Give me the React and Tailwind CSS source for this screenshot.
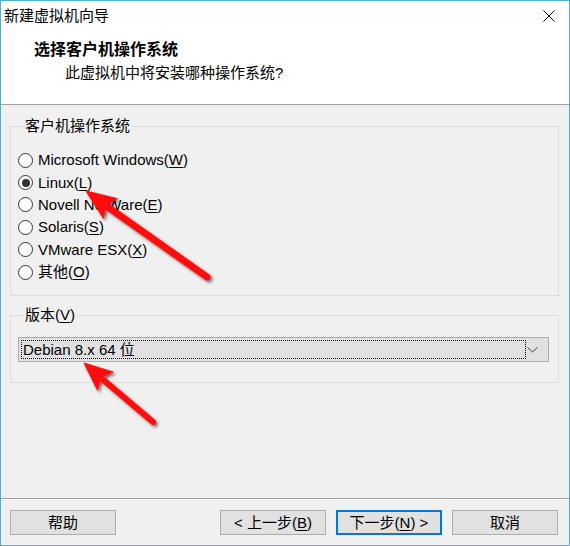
import React from 'react';

const FONT = { fontFamily: '"Liberation Sans", "Noto Sans CJK SC", sans-serif' };

const Mn = ({ children }) => <span className="underline underline-offset-2">{children}</span>;

const options = [
  { label: 'Microsoft Windows', key: 'W' },
  { label: 'Linux', key: 'L', checked: true },
  { label: 'Novell NetWare', key: 'E' },
  { label: 'Solaris', key: 'S' },
  { label: 'VMware ESX', key: 'X' },
  { label: '其他', key: 'O' },
];

const Radio = ({ checked }) => (
  <span className="w-[15px] h-[15px] rounded-full border border-[#333] bg-white flex items-center justify-center shrink-0">
    {checked && <span className="w-[8px] h-[8px] rounded-full bg-[#333]" />}
  </span>
);

const Button = ({ children, primary }) => (
  <button
    className={
      primary
        ? 'w-[106px] h-[25px] bg-[#e1e1e1] border-2 border-[#0078d7] text-[15px] leading-none text-black'
        : 'w-[106px] h-[25px] bg-[#e1e1e1] border border-[#adadad] text-[15px] leading-none text-black'
    }
  >
    {children}
  </button>
);

const Arrows = () => (
  <svg className="absolute inset-0 pointer-events-none" width="570" height="546">
    <defs>
      <filter id="sh" x="-20%" y="-20%" width="140%" height="140%">
        <feDropShadow dx="2" dy="2" stdDeviation="1.5" floodColor="#000" floodOpacity="0.55" />
      </filter>
    </defs>
    <g filter="url(#sh)" fill="#ff0a0a" stroke="#ff0a0a">
      <line x1="104" y1="204" x2="206" y2="276" strokeWidth="7" strokeLinecap="round" />
      <polygon points="85,190 116.4,197.7 104.5,204 102.4,217.3" strokeWidth="1" strokeLinejoin="round" />
      <line x1="99" y1="376" x2="152" y2="421" strokeWidth="6" strokeLinecap="round" />
      <polygon points="83,362 112.1,371.1 99.7,376.3 96.5,389.3" strokeWidth="1" strokeLinejoin="round" />
    </g>
  </svg>
);

export default function App() {
  return (
    <div className="relative w-[570px] h-[546px] flex flex-col border border-[#4fb0cf] bg-[#f0f0f0] text-black text-[15px]" style={FONT}>
      {/* title + header */}
      <div className="bg-white border-b border-[#a0a0a0]">
        <div className="h-[30px] flex items-center justify-between pl-[3px] pr-[14px]">
          <span className="leading-[20px]">新建虚拟机向导</span>
          <svg width="12" height="12" viewBox="0 0 12 12">
            <path d="M0.5 0.5L11.5 11.5M11.5 0.5L0.5 11.5" stroke="#000" strokeWidth="1" />
          </svg>
        </div>
        <div className="h-[73px] pt-[9px]">
          <div className="pl-[33px] text-[16px] font-bold leading-[20px]">选择客户机操作系统</div>
          <div className="pl-[64px] mt-[3px] leading-[20px]">此虚拟机中将安装哪种操作系统?</div>
        </div>
      </div>

      {/* body */}
      <div className="flex-1">
        <fieldset className="mt-[11px] ml-[9px] w-[549px] border border-[#dcdcdc] pt-[13px] pb-[12px] pl-[7px]">
          <legend className="ml-[6px] px-[1px] leading-[20px]">客户机操作系统</legend>
          {options.map((o) => (
            <div key={o.key} className="h-[22.4px] flex items-center gap-[5px]">
              <Radio checked={o.checked} />
              <span className="leading-[20px]">
                {o.label}(<Mn>{o.key}</Mn>)
              </span>
            </div>
          ))}
        </fieldset>

        <fieldset className="mt-[9px] ml-[9px] w-[549px] border border-[#dcdcdc] pt-[12px] pb-[20px] pl-[7px] pr-[9px]">
          <legend className="ml-[6px] px-[1px] leading-[20px]">
            版本(<Mn>V</Mn>)
          </legend>
          <div className="h-[25px] w-[531px] bg-[#e1e1e1] border border-[#adadad] flex items-center pl-[2px] pr-[10px]">
            <div className="h-[19px] w-[505px] border border-dotted border-black flex items-center pl-[1px] leading-[20px]">
              Debian 8.x 64 位
            </div>
            <div className="flex-1 flex justify-end">
              <svg width="11" height="6" viewBox="0 0 11 6">
                <polyline points="0.5,0.5 5.5,5 10.5,0.5" fill="none" stroke="#444" strokeWidth="1" />
              </svg>
            </div>
          </div>
        </fieldset>
      </div>

      {/* footer */}
      <div className="border-t border-[#a0a0a0]">
        <div className="border-t border-white h-[46px] flex items-start justify-between pt-[10px] pl-[9px] pr-[11px]">
          <Button>帮助</Button>
          <div className="flex gap-[10px]">
            <Button>
              &lt; 上一步(<Mn>B</Mn>)
            </Button>
            <Button primary>
              下一步(<Mn>N</Mn>) &gt;
            </Button>
            <Button>取消</Button>
          </div>
        </div>
      </div>

      <Arrows />
    </div>
  );
}
